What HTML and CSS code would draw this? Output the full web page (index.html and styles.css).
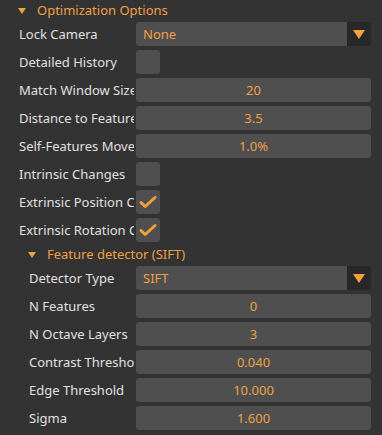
FILE: index.html
```html
<!DOCTYPE html>
<html>
<head>
<meta charset="utf-8">
<link rel="stylesheet" href="styles.css">
</head>
<body>
<div class="panel">
  <div class="header lvl1"><span class="tri"></span><span>Optimization Options</span></div>
  <div class="row lvl1"><div class="label">Lock Camera</div><div class="select"><span class="sel-text">None</span><span class="sel-btn"><span class="arrow"></span></span></div></div>
  <div class="row lvl1"><div class="label">Detailed History</div><div class="check"></div></div>
  <div class="row lvl1"><div class="label">Match Window Size</div><div class="field">20</div></div>
  <div class="row lvl1"><div class="label">Distance to Feature</div><div class="field">3.5</div></div>
  <div class="row lvl1"><div class="label">Self-Features Movement</div><div class="field">1.0%</div></div>
  <div class="row lvl1"><div class="label">Intrinsic Changes</div><div class="check"></div></div>
  <div class="row lvl1"><div class="label">Extrinsic Position Changes</div><div class="check"><svg class="tick" width="24" height="24" viewBox="0 0 24 24"><polyline points="5,12.5 9.2,16.5 19,7.5" fill="none" stroke="#f5a03c" stroke-width="3" stroke-linecap="round" stroke-linejoin="round"/></svg></div></div>
  <div class="row lvl1"><div class="label">Extrinsic Rotation Changes</div><div class="check"><svg class="tick" width="24" height="24" viewBox="0 0 24 24"><polyline points="5,12.5 9.2,16.5 19,7.5" fill="none" stroke="#f5a03c" stroke-width="3" stroke-linecap="round" stroke-linejoin="round"/></svg></div></div>
  <div class="header lvl2"><span class="tri"></span><span>Feature detector (SIFT)</span></div>
  <div class="row lvl2"><div class="label">Detector Type</div><div class="select"><span class="sel-text">SIFT</span><span class="sel-btn"><span class="arrow"></span></span></div></div>
  <div class="row lvl2"><div class="label">N Features</div><div class="field">0</div></div>
  <div class="row lvl2"><div class="label">N Octave Layers</div><div class="field">3</div></div>
  <div class="row lvl2"><div class="label">Contrast Threshold</div><div class="field">0.040</div></div>
  <div class="row lvl2"><div class="label">Edge Threshold</div><div class="field">10.000</div></div>
  <div class="row lvl2"><div class="label">Sigma</div><div class="field">1.600</div></div>
</div>
</body>
</html>
```
FILE: styles.css
```css
html, body {
  margin: 0;
  padding: 0;
  background: #333333;
}
body {
  width: 382px;
  height: 435px;
  overflow: hidden;
  font-family: "Noto Sans", "Open Sans", sans-serif;
  font-size: 13px;
  color: #e0e0e0;
}
.panel {
  display: flex;
  flex-direction: column;
  gap: 4px;
  padding: 2px 11px 0 0;
}
.header {
  height: 16px;
  display: flex;
  align-items: center;
  color: #f0a046;
  line-height: 16px;
}
.header.lvl1 { padding-left: 18px; }
.header.lvl2 { padding-left: 28px; }
.tri {
  width: 0;
  height: 0;
  border-left: 4px solid transparent;
  border-right: 4px solid transparent;
  border-top: 6px solid #f0a046;
  margin-right: 11px;
  margin-top: 1px;
}
.row {
  display: flex;
  align-items: center;
  height: 24px;
}
.row.lvl1 .label { padding-left: 19px; width: 115px; }
.row.lvl2 .label { padding-left: 29px; width: 105px; }
.label {
  flex: 0 0 auto;
  white-space: nowrap;
  overflow: hidden;
  margin-right: 2px;
  line-height: 24px;
}
.field {
  flex: 1;
  height: 24px;
  line-height: 24px;
  background: #4f4f4f;
  border-radius: 3px;
  text-align: center;
  color: #f0a046;
}
.select {
  flex: 1;
  height: 24px;
  display: flex;
  background: #4f4f4f;
  border-radius: 3px;
  overflow: hidden;
  color: #f0a046;
}
.sel-text {
  flex: 1;
  padding-left: 7px;
  line-height: 24px;
}
.sel-btn {
  width: 24px;
  background: #282828;
  display: flex;
  align-items: center;
  justify-content: center;
}
.arrow {
  width: 0;
  height: 0;
  border-left: 6px solid transparent;
  border-right: 6px solid transparent;
  border-top: 9px solid #f5a03c;
}
.check {
  width: 24px;
  height: 24px;
  background: #4f4f4f;
  border-radius: 3px;
}
.tick { display: block; }
```
